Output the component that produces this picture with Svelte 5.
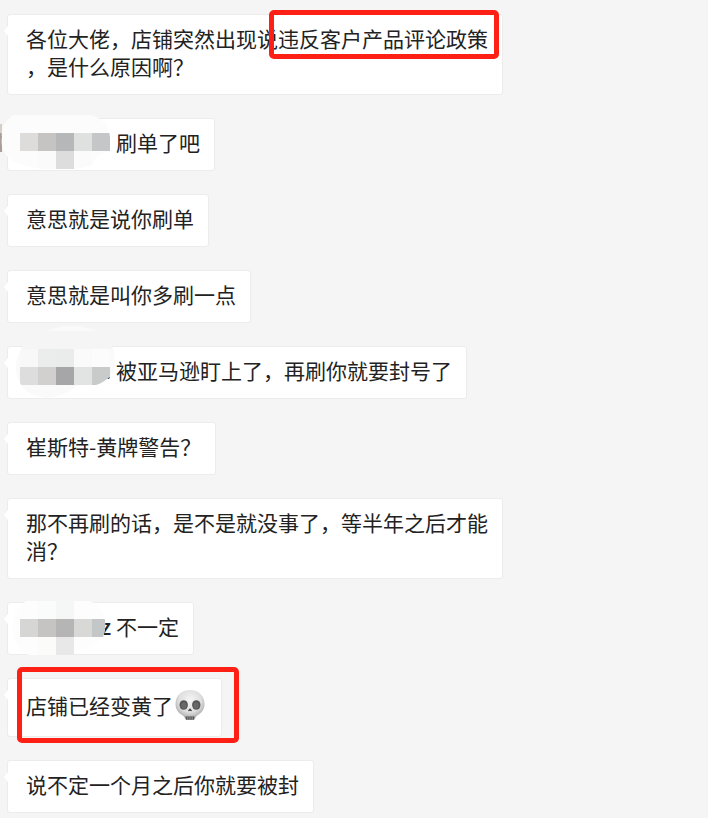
<script lang="ts">
	type Cell = { x: number; y: number; fill: string };
	type Mosaic = { id: string; shape: string; base: string; cells: Cell[]; rest: string };
	type Message = {
		text: string;
		marked?: string;
		after?: string;
		mosaic?: Mosaic;
		skull?: boolean;
	};

	// one row of 18px mosaic tiles, empty strings are skipped
	const row = (y: number, fills: string[]): Cell[] =>
		fills.map((fill, i) => ({ x: 20 + i * 18, y, fill })).filter((c) => c.fill !== '');

	const messages: Message[] = [
		{
			text: '各位大佬，店铺突然出现说',
			marked: '违反客户产品评论政策',
			after: '\n，是什么原因啊？'
		},
		{
			text: '刷单了吧',
			mosaic: {
				id: 'first',
				shape: 'M14 20H90Q108 24 110 42V56Q96 58 91 71L74 74H42Q14 70 8 62Q0 54 2 42Q0 28 14 20Z',
				base: '#fcfcfc',
				rest: '',
				cells: [
					...row(38, ['#dddcda', '#c5c4c2', '#b6b7b9', '#dfe1e1', '#c5c6c7']),
					...row(56, ['', '#fafafa', '#dddddd', '#fbfbfb', ''])
				]
			}
		},
		{ text: '意思就是说你刷单' },
		{ text: '意思就是叫你多刷一点' },
		{
			text: '被亚马逊盯上了，再刷你就要封号了',
			mosaic: {
				id: 'second',
				shape: 'M48 8Q70 -2 96 8L108 18Q116 26 115 42Q113 56 96 62H78Q64 74 46 75Q26 72 20 60Q10 40 24 22Z',
				base: '#fafafa',
				rest: '.',
				cells: [
					...row(8, ['#f5f5f5', '#f5f5f5', '#f5f5f5', '#f5f5f5', '#f5f5f5']),
					...row(26, ['#f8f8f8', '#ebecec', '#eaebeb', '#fafafa', '#fcfcfc']),
					...row(44, ['#dddddd', '#d1d0ce', '#a6a6a8', '#e2e4e4', '#c9caca'])
				]
			}
		},
		{ text: '崔斯特-黄牌警告？' },
		{ text: '那不再刷的话，是不是就没事了，等半年之后才能\n消？' },
		{
			text: '不一定',
			mosaic: {
				id: 'third',
				shape: 'M26 22H90Q104 28 105 42Q106 50 103 58Q92 70 74 72V76H28Q12 66 12 48Q12 32 26 22Z',
				base: '#fdfdfd',
				rest: 'z',
				cells: [
					...row(22, ['', '#fafbfb', '#f5f6f6', '', '']),
					...row(40, ['#d6d6d5', '#c5c4c2', '#b5b5b5', '#d8d9d6', '#c4c7c7']),
					...row(58, ['', '#fbfbfa', '#e8e8e9', '', ''])
				]
			}
		},
		{ text: '店铺已经变黄了', skull: true },
		{ text: '说不定一个月之后你就要被封' }
	];
</script>

<main>
	{#each messages as message}
		<div class="bubble" class:boxed={message.skull}>
			{#if message.mosaic}
				<span class="name">{message.mosaic.rest}</span>
				<svg class="mosaic" viewBox="0 0 120 80" aria-hidden="true">
					<defs>
						<clipPath id={message.mosaic.id}><path d={message.mosaic.shape} /></clipPath>
					</defs>
					{#if message.mosaic.id === 'first'}
						<rect x="0" y="29" width="2" height="9" fill="#d5cfc8" />
						<rect x="0" y="38" width="2" height="19" fill="#a99e98" />
					{/if}
					<g clip-path="url(#{message.mosaic.id})" shape-rendering="crispEdges">
						<rect width="120" height="80" fill={message.mosaic.base} />
						{#each message.mosaic.cells as cell}
							<rect x={cell.x} y={cell.y} width="18" height="18" fill={cell.fill} />
						{/each}
						{#if message.mosaic.id === 'second'}
							<rect x="110" y="8" width="8" height="18" fill="#f5f5f5" />
						{/if}
					</g>
				</svg>
			{/if}
			<p>{message.text}{#if message.marked}<mark>{message.marked}</mark>{/if}{message.after ?? ''}</p>
			{#if message.skull}
				<svg class="skull" viewBox="0 0 30 32" role="img" aria-label="骷髅">
					<defs>
						<radialGradient id="bone" cx="0.5" cy="0.35" r="0.6">
							<stop offset="0" stop-color="#f6f6f6" />
							<stop offset="0.65" stop-color="#dedede" />
							<stop offset="1" stop-color="#a9a9a9" />
						</radialGradient>
					</defs>
					<path
						d="M15 1C6.500 1 .5 7 .5 15C.5 20 3 23.500 7 26C8.500 27 9.500 28 10 29.500Q10.500 31 12 31H18Q19.500 31 20 29.500C20.500 28 21.500 27 23 26C27 23.500 29.500 20 29.500 15C29.500 7 23.500 1 15 1Z"
						fill="url(#bone)"
					/>
					<ellipse cx="8.700" cy="16" rx="4.200" ry="4.800" fill="#555" />
					<ellipse cx="21.300" cy="16" rx="4.200" ry="4.800" fill="#555" />
					<ellipse cx="8.900" cy="16.500" rx="2.600" ry="3.200" fill="#686868" />
					<ellipse cx="21.100" cy="16.500" rx="2.600" ry="3.200" fill="#686868" />
					<path d="M15 19.300L17 21.500Q16.500 22.600 15 21.800Q13.500 22.600 13 21.500Z" fill="#444" />
					<path d="M10.500 27.500H19.500L18.800 30.800H11.200Z" fill="#555" />
					<path d="M12.800 28V31M15 28V31M17.200 28V31" stroke="#b5b5b5" stroke-width="0.7" />
				</svg>
			{/if}
		</div>
	{/each}
</main>

<style>
	:global(body) {
		background-color: #f5f5f5;
	}

	main {
		display: flex;
		flex-direction: column;
		align-items: flex-start;
		gap: 23px;
		padding: 14px 7px 5px;
		font-family: 'Noto Sans CJK SC', sans-serif;
		font-size: 21px;
		line-height: 28px;
		color: #222;
	}

	.bubble {
		position: relative;
		display: flex;
		align-items: center;
		padding: 9px 14px 14px 18px;
		border: 1px solid #ececec;
		border-radius: 3px;
		background-color: #fff;
	}

	/* little tail on the left */
	.bubble::before {
		content: '';
		position: absolute;
		top: 11px;
		left: -4px;
		width: 4px;
		height: 10px;
		background-color: #fff;
		clip-path: polygon(100% 0, 0 50%, 100% 100%);
	}

	p {
		margin: 0;
		white-space: pre-line;
	}

	mark {
		position: relative;
		display: inline-block;
		background: none;
		color: inherit;
	}

	mark::after,
	.boxed::after {
		content: '';
		position: absolute;
		border: 5px solid #ff2015;
		border-radius: 5px;
	}

	mark::after {
		inset: -14px -11px -7px -9px;
	}

	.boxed::after {
		inset: -12px -18px -7px 9px;
	}

	.name {
		box-sizing: border-box;
		width: 90px;
		padding-right: 5px;
		text-align: right;
		font-weight: 500;
	}

	.mosaic {
		position: absolute;
		top: -24px;
		left: -8px;
		width: 120px;
		height: 80px;
	}

	.skull {
		width: 30px;
		height: 32px;
		margin: 1px 2px;
	}
</style>
